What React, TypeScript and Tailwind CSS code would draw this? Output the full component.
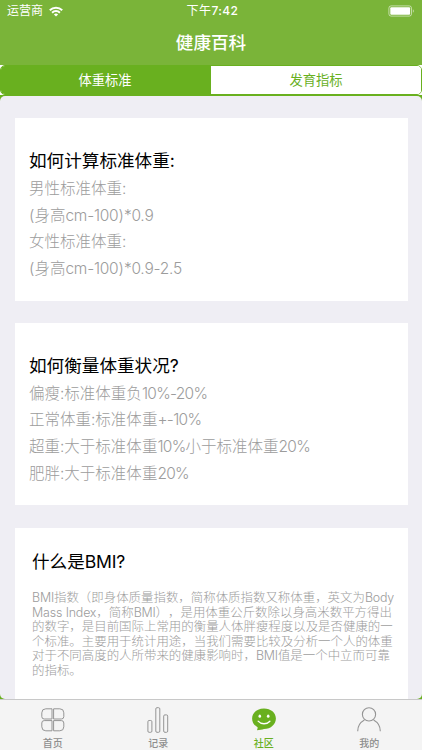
import type { ReactNode } from "react";

const guides = [
  {
    title: "如何计算标准体重:",
    lines: ["男性标准体重:", "(身高cm-100)*0.9", "女性标准体重:", "(身高cm-100)*0.9-2.5"],
  },
  {
    title: "如何衡量体重状况?",
    lines: [
      "偏瘦:标准体重负10%-20%",
      "正常体重:标准体重+-10%",
      "超重:大于标准体重10%小于标准体重20%",
      "肥胖:大于标准体重20%",
    ],
  },
];

const bmiLines = [
  "BMI指数（即身体质量指数，简称体质指数又称体重，英文为Body",
  "Mass Index，简称BMI），是用体重公斤数除以身高米数平方得出",
  "的数字，是目前国际上常用的衡量人体胖瘦程度以及是否健康的一",
  "个标准。主要用于统计用途，当我们需要比较及分析一个人的体重",
  "对于不同高度的人所带来的健康影响时，BMI值是一个中立而可靠",
  "的指标。",
];

// tighten latin letters and digits, leave chinese at its natural width
function MixedText({ text }: { text: string }) {
  return text.split(/([a-zA-Z0-9%*.+-]{2,})/).map((part, i) =>
    i % 2 === 1 ? (
      <span key={i} className={part.includes("%") ? "tracking-[-0.045em]" : "tracking-[-0.015em]"}>
        {part}
      </span>
    ) : (
      part
    )
  );
}

function StatusBar() {
  return (
    <div className="grid h-[22px] grid-cols-3 items-center px-[7px] text-[12px] leading-[22px]">
      <div className="flex items-center gap-[6px]">
        <span>运营商</span>
        <svg width="14" height="11" viewBox="0 0 14 11" fill="none" stroke="white" strokeWidth="2">
          <path d="M0.8 4.2a8.8 8.8 0 0 1 12.4 0" />
          <path d="M3.1 6.7a5.5 5.5 0 0 1 7.8 0" />
          <path d="M7 10.6 4.9 8.5a3 3 0 0 1 4.2 0Z" fill="white" stroke="none" />
        </svg>
      </div>
      <div className="pl-[3px] text-center tracking-[0.4px]">
        下午<span className="font-medium">7:42</span>
      </div>
      <div className="flex justify-end">
        <svg width="27" height="12" viewBox="0 0 27 12">
          <rect x="0.9" y="0.9" width="22.6" height="10.2" rx="2.2" fill="none" stroke="white" strokeOpacity="0.55" />
          <rect x="2.3" y="2.2" width="19.8" height="7.6" rx="1" fill="white" />
          <path d="M24.9 4.2c1.3.6 1.3 3 0 3.6Z" fill="white" fillOpacity="0.55" />
        </svg>
      </div>
    </div>
  );
}

function HomeIcon() {
  return (
    <svg width="24" height="24" viewBox="0 0 24 24" fill="none" stroke="#949494" strokeWidth="1">
      <path d="M4.8 0.8H11V11H3.2A2.4 2.4 0 0 1 0.8 8.6V4.8a4 4 0 0 1 4-4Z" />
      <path d="M12.6 0.8h6.2a4 4 0 0 1 4 4v3.8a2.4 2.4 0 0 1-2.4 2.4h-7.8Z" />
      <path d="M3.2 12.6H11v10.2H4.8a4 4 0 0 1-4-4V15a2.4 2.4 0 0 1 2.4-2.4Z" />
      <path d="M12.6 12.6h7.8a2.4 2.4 0 0 1 2.4 2.4v3.8a4 4 0 0 1-4 4h-6.2Z" />
    </svg>
  );
}

function ChartIcon() {
  return (
    <svg width="22" height="26" viewBox="0 0 22 26" fill="none" stroke="#949494" strokeWidth="1">
      <rect x="0.9" y="13.5" width="4" height="11.8" rx="1.2" />
      <rect x="8.8" y="0.7" width="4" height="24.6" rx="1.2" />
      <rect x="16.7" y="7.9" width="4" height="17.4" rx="1.2" />
    </svg>
  );
}

function ChatIcon() {
  return (
    <svg width="24" height="23" viewBox="0 0 24 23">
      <path
        d="M12 0.5C5.2 0.5 0.1 4.8 0.1 10.5c0 4 2.1 7 5.5 8.7.1 1.2-.2 2-.7 3 2.8-.2 5-.5 7.1-1.1 7-.3 11.9-4.8 11.9-10.6C23.9 4.8 18.8 0.5 12 0.5Z"
        fill="#69b01f"
      />
      <ellipse cx="7.8" cy="8.2" rx="1.3" ry="1.6" fill="white" />
      <ellipse cx="16.2" cy="8.2" rx="1.3" ry="1.6" fill="white" />
      <path d="M6.1 13.2c2.9 3.4 8.8 3.4 11.8 0" fill="none" stroke="white" strokeWidth="1.3" strokeLinecap="round" />
    </svg>
  );
}

function UserIcon() {
  return (
    <svg width="24" height="25" viewBox="0 0 24 25" fill="none" stroke="#949494" strokeWidth="1.1">
      <circle cx="12" cy="7.4" r="6.6" />
      <path d="M0.7 24.2c0-5.1 2.6-8.8 6.7-11.1M23.3 24.2c0-5.1-2.6-8.8-6.7-11.1" />
    </svg>
  );
}

interface TabItemProps {
  icon: ReactNode;
  label: string;
  active?: boolean;
}

function TabItem({ icon, label, active }: TabItemProps) {
  return (
    <div className="flex flex-1 flex-col items-center pt-[6px]">
      <div className="flex h-[27px] items-center">{icon}</div>
      <span
        className={
          active
            ? "mt-[3px] text-[10px] font-medium leading-[14px] text-[#69b01f]"
            : "mt-[3px] text-[10px] font-medium leading-[14px] text-[#8e8e8e]"
        }
      >
        {label}
      </span>
    </div>
  );
}

export default function App() {
  return (
    <div className="flex h-[750px] w-[422px] flex-col overflow-hidden bg-[#69b01f] font-[Inter,'Noto_Sans_CJK_SC',sans-serif] [text-spacing-trim:space-all]">
      <header className="h-[65px] shrink-0 bg-[#7ab439] text-white">
        <StatusBar />
        <h1 className="pt-[7px] text-center text-[17.6px] font-medium leading-[28px]">健康百科</h1>
      </header>

      <div className="h-[30px] shrink-0 bg-white">
        <div className="flex h-full overflow-hidden rounded-[5px] border border-[#69b01f] text-center text-[13.3px] leading-[28px]">
          <div className="w-1/2 bg-[#69b01f] pr-[2px] text-white">体重标准</div>
          <div className="w-1/2 bg-white text-[#69b01f]">发育指标</div>
        </div>
      </div>

      <main className="mt-[1px] flex min-h-0 flex-1 flex-col gap-[22.5px] overflow-hidden rounded-[5px] bg-[#efeef4] px-[14.5px] pt-[22.4px]">
        {guides.map((guide) => (
          <section key={guide.title} className="h-[182.3px] shrink-0 whitespace-nowrap bg-white px-[14.5px] pt-[28.6px]">
            <h2 className="mb-[2px] text-[17.6px] leading-[27px] text-black">{guide.title}</h2>
            {guide.lines.map((line) => (
              <p key={line} className="text-[15.5px] font-light leading-[26.7px] text-[#9c9c9c]">
                <MixedText text={line} />
              </p>
            ))}
          </section>
        ))}
        <section className="min-h-0 flex-1 whitespace-nowrap bg-white px-[17.5px] pt-[20px]">
          <h2 className="text-[17.6px] leading-[27px] text-black">
            <MixedText text="什么是BMI?" />
          </h2>
          <div className="mt-[16px] text-[12.45px] font-light leading-[14.6px] text-[#9c9c9c]">
            {bmiLines.map((line) => (
              <p key={line}>
                <MixedText text={line} />
              </p>
            ))}
          </div>
        </section>
      </main>

      <nav className="flex h-[51px] shrink-0 border-t border-[#c8c8c8] bg-[#f4f4f4]">
        <TabItem icon={<HomeIcon />} label="首页" />
        <TabItem icon={<ChartIcon />} label="记录" />
        <TabItem icon={<ChatIcon />} label="社区" active />
        <TabItem icon={<UserIcon />} label="我的" />
      </nav>
    </div>
  );
}
